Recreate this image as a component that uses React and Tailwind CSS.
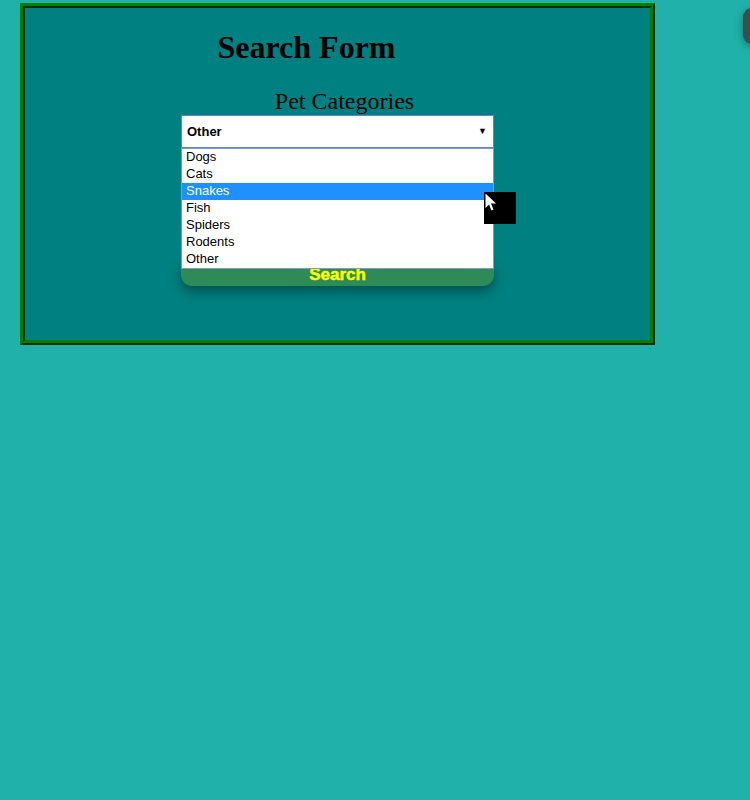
import React from "react";

const pets = ["Dogs", "Cats", "Snakes", "Fish", "Spiders", "Rodents", "Other"];

export default function App() {
  const selected = "Snakes";

  return (
    <div className="relative min-h-[800px] overflow-hidden bg-[#20B2AA] pl-[20px] pt-[3px]">
      {/* corner widget, mostly off screen */}
      <div className="absolute left-[743px] top-[8px] h-[36px] w-[30px] rounded-[9px] bg-[#3a4f4f] shadow-[0_2px_8px_rgba(0,0,0,0.35)]"></div>

      {/* Form box */}
      <div className="h-[342px] w-[635px] border-[5px] border-[#008000] bg-[#008080] [border-style:ridge]">
        <div className="flex flex-col items-center font-['Liberation_Serif',serif] text-black">
          <h1 className="mr-[62px] mt-[21px] text-[32px] font-bold leading-[37px]">
            Search Form
          </h1>
          <div className="ml-[14px] mt-[21px] text-[24px] leading-[28px]">
            Pet Categories
          </div>
        </div>

        <div className="relative mx-auto mt-0 w-[313px] font-['Liberation_Sans',Arial,sans-serif]">
          {/* Select */}
          <div className="flex h-[33px] items-center justify-between border border-[#5b87d6] bg-white pl-[5px] pr-[6px]">
            <span className="text-[13px] font-bold text-black">Other</span>
            <span className="text-[9px] leading-none text-black">▼</span>
          </div>

          {/* Search button */}
          <div className="mt-[114px] flex h-[24px] items-end justify-center rounded-b-[11px] bg-[#2E8B57] pb-[2px] shadow-[0_6px_12px_rgba(0,0,0,0.35)]">
            <span className="text-[17px] font-black leading-[19px] text-[#FFFF00] [-webkit-text-stroke:0.5px_#FFFF00]">
              Search
            </span>
          </div>

          {/* Open dropdown list */}
          <ul className="absolute left-0 top-[33px] w-[313px] border border-[#7f9db9] bg-white">
            {pets.map((p) => (
              <li
                key={p}
                className={
                  p === selected
                    ? "h-[17px] bg-[#1E90FF] pb-[2px] pl-[4px] text-[13px] leading-[15px] text-white"
                    : "h-[17px] pb-[2px] pl-[4px] text-[13px] leading-[15px] text-black"
                }
              >
                {p}
              </li>
            ))}
          </ul>
        </div>
      </div>

      {/* Mouse pointer over black square */}
      <div className="absolute left-[484px] top-[192px] h-[32px] w-[32px] bg-black">
        <svg width="14" height="20" viewBox="0 0 14 20" className="absolute left-[1px] top-[1px]">
          <path d="M0.5 0.5 L0.5 15 L4 11.5 L6.5 17.5 L8.5 16.5 L6 10.5 L11 10.5 Z" fill="#fff" />
        </svg>
      </div>
    </div>
  );
}
